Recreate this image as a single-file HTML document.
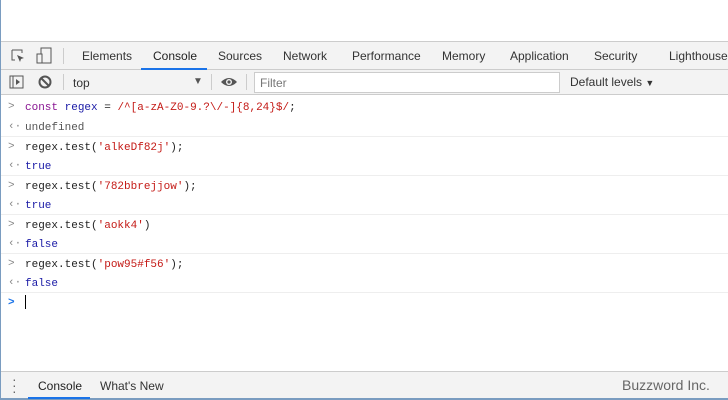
<!DOCTYPE html>
<html><head><style>
*{margin:0;padding:0;box-sizing:border-box}
body{width:728px;height:400px;overflow:hidden;background:#fff;font-family:"Liberation Sans",sans-serif;position:relative}
.lb{position:absolute;left:0;top:0;width:1px;height:400px;background:#7a9cc0;z-index:5}
.tabs{position:absolute;top:41px;left:0;width:728px;height:29px;background:#f3f3f3;border-top:1px solid #ccc;border-bottom:1px solid #ccc}
.tabs span{position:absolute;top:7px;font-size:12px;color:#333}
.tb{position:absolute;top:70px;left:0;width:728px;height:25px;background:#f3f3f3;border-bottom:1px solid #ccc}
.line{position:absolute;left:0;width:728px;height:19.5px;font-family:"Liberation Mono",monospace;font-size:11px;color:#222}
.line .t{position:absolute;left:25px;top:5px}
.line .a{position:absolute;left:8px;top:4px;color:#888;font-size:11px}
.sep{border-top:1px solid #eee}
.s{color:#c41a16}.k{color:#881391}.v{color:#1a1aa6}
.bot{position:absolute;top:371px;left:0;width:728px;height:29px;background:#f3f3f3;border-top:1px solid #ccc;border-bottom:2px solid #7a9cc0}
.bot span{position:absolute;top:7px;font-size:12px;color:#333}
</style></head><body>
<div class="lb"></div>
<div class="tabs">
<svg style="position:absolute;left:10px;top:6px" width="16" height="16"><path d="M2 2h10v3M2 2v10h3" stroke="#555" fill="none"/><path d="M7 7l7 3-3 1-1 3z" fill="#555"/></svg>
<svg style="position:absolute;left:36px;top:5px" width="16" height="18"><rect x="5" y="1" width="10" height="15" stroke="#555" fill="none"/><rect x="1" y="7" width="5" height="9" stroke="#555" fill="#f3f3f3"/></svg>
<div style="position:absolute;left:63px;top:6px;width:1px;height:16px;background:#ccc"></div>
<span style="left:82px">Elements</span>
<span style="left:153px;color:#222">Console</span>
<div style="position:absolute;left:141px;top:26px;width:66px;height:2px;background:#1a73e8"></div>
<span style="left:218px">Sources</span>
<span style="left:283px">Network</span>
<span style="left:352px">Performance</span>
<span style="left:442px">Memory</span>
<span style="left:510px">Application</span>
<span style="left:594px">Security</span>
<span style="left:669px">Lighthouse</span>
</div>
<div class="tb">
<svg style="position:absolute;left:9px;top:5px" width="16" height="14"><rect x="1" y="1" width="13" height="12" stroke="#555" fill="none"/><line x1="4" y1="1" x2="4" y2="13" stroke="#555"/><path d="M7 4l4 3-4 3z" fill="#555"/></svg>
<svg style="position:absolute;left:38px;top:5px" width="14" height="14"><circle cx="7" cy="7" r="5.5" stroke="#555" stroke-width="2" fill="none"/><line x1="3" y1="3" x2="11" y2="11" stroke="#555" stroke-width="2"/></svg>
<div style="position:absolute;left:63px;top:4px;width:1px;height:16px;background:#ccc"></div>
<span style="position:absolute;left:73px;top:6px;font-size:12px;color:#333">top</span>
<span style="position:absolute;left:193px;top:6px;font-size:10px;color:#555">▼</span>
<div style="position:absolute;left:211px;top:4px;width:1px;height:16px;background:#ccc"></div>
<svg style="position:absolute;left:220px;top:6px" width="18" height="12"><path d="M1 6Q9 -2 17 6Q9 14 1 6z" fill="#555"/><circle cx="9" cy="6" r="3" fill="#f3f3f3"/><circle cx="9" cy="6" r="1.6" fill="#555"/></svg>
<div style="position:absolute;left:246px;top:4px;width:1px;height:16px;background:#ccc"></div>
<div style="position:absolute;left:254px;top:2px;width:306px;height:21px;background:#fff;border:1px solid #ccc"><span style="position:absolute;left:5px;top:3px;font-size:12px;color:#777">Filter</span></div>
<span style="position:absolute;left:570px;top:5px;font-size:12px;color:#333">Default levels <span style="font-size:9px">▼</span></span>
</div>
<div class="line" style="top:97px"><span class="a">&gt;</span><span class="t"><span class="k">const</span> <span class="v">regex</span> = <span class="s">/^[a-zA-Z0-9.?\/-]{8,24}$/</span>;</span></div>
<div class="line" style="top:116.5px"><span class="a">‹·</span><span class="t" style="color:#555">undefined</span></div>
<div class="line sep" style="top:136px"><span class="a">&gt;</span><span class="t">regex.test(<span class="s">'alkeDf82j'</span>);</span></div>
<div class="line" style="top:155.5px"><span class="a">‹·</span><span class="t v">true</span></div>
<div class="line sep" style="top:175px"><span class="a">&gt;</span><span class="t">regex.test(<span class="s">'782bbrejjow'</span>);</span></div>
<div class="line" style="top:194.5px"><span class="a">‹·</span><span class="t v">true</span></div>
<div class="line sep" style="top:214px"><span class="a">&gt;</span><span class="t">regex.test(<span class="s">'aokk4'</span>)</span></div>
<div class="line" style="top:233.5px"><span class="a">‹·</span><span class="t v">false</span></div>
<div class="line sep" style="top:253px"><span class="a">&gt;</span><span class="t">regex.test(<span class="s">'pow95#f56'</span>);</span></div>
<div class="line" style="top:272.5px"><span class="a">‹·</span><span class="t v">false</span></div>
<div class="line sep" style="top:292px"><span class="a" style="color:#1a73e8;font-weight:bold">&gt;</span><span style="position:absolute;left:25px;top:2px;width:1px;height:14px;background:#000"></span></div>
<div class="bot">
<span style="left:12px;top:4px;line-height:6px;font-size:14px;color:#666">·<br>·<br>·</span>
<span style="left:38px;color:#222">Console</span>
<div style="position:absolute;left:28px;top:25px;width:62px;height:2px;background:#1a73e8"></div>
<span style="left:100px">What's New</span>
<span style="left:622px;font-size:14px;top:5px;color:#666">Buzzword Inc.</span>
</div>
</body></html>
